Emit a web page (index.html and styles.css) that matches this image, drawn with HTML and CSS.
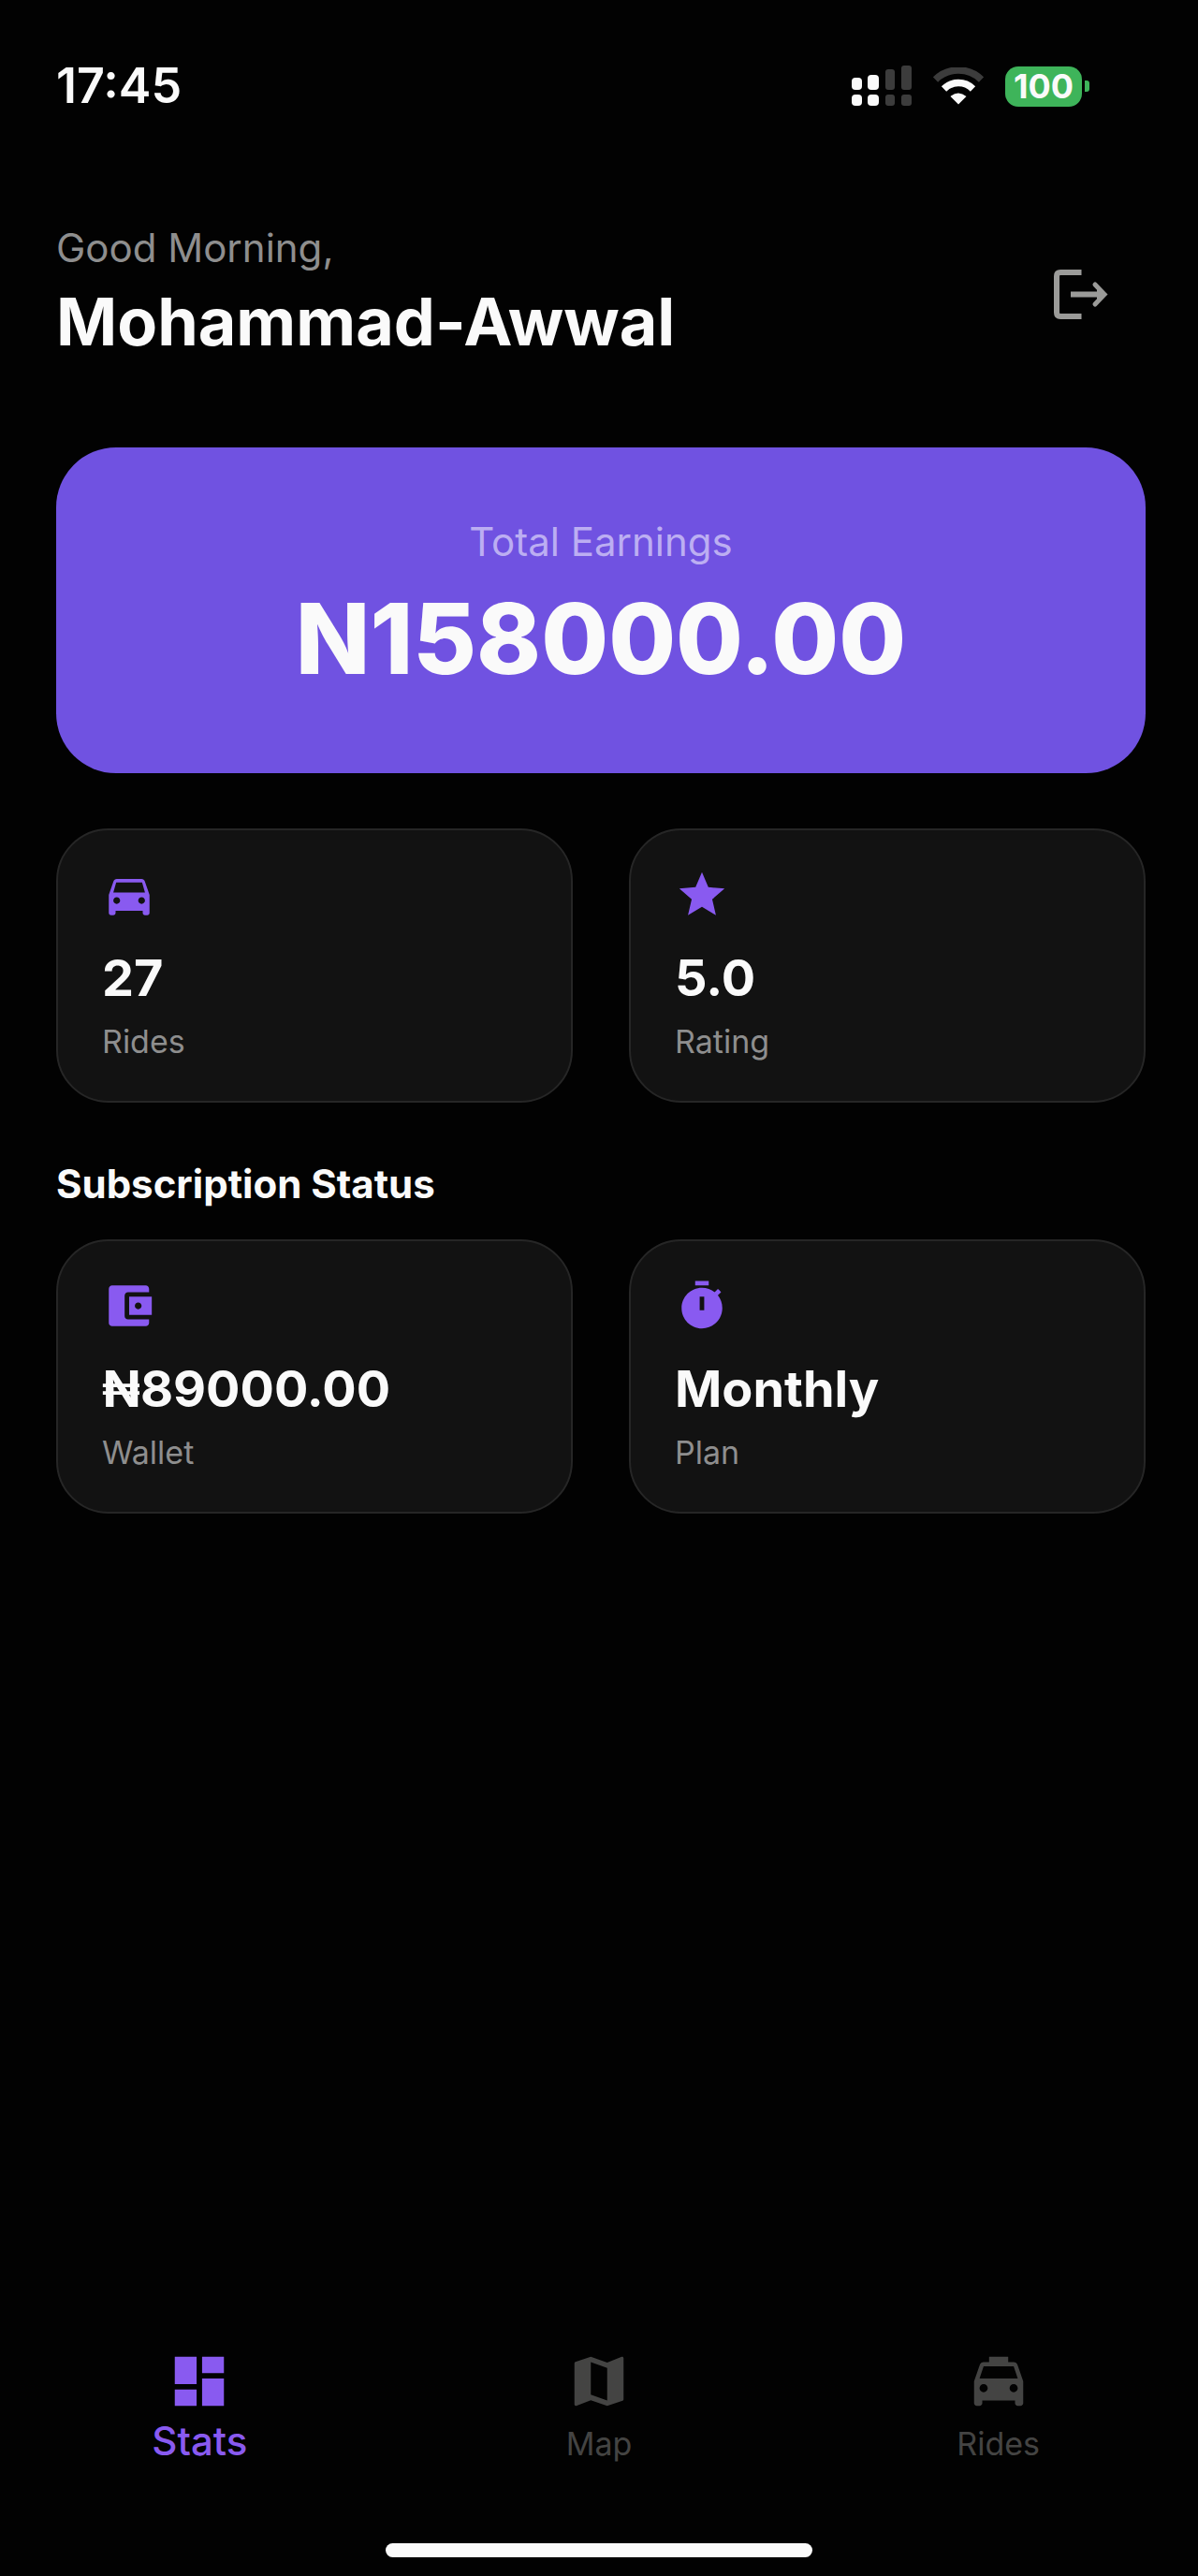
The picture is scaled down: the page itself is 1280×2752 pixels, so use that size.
FILE: index.html
```html
<!DOCTYPE html>
<html lang="en">
<head>
  <meta charset="UTF-8" />
  <meta name="viewport" content="width=device-width, initial-scale=1" />
  <title>Driver Stats</title>
  <link rel="stylesheet" href="styles.css">
</head>
<body>

<!-- Status bar -->
<div class="status-bar">
  <span class="time">17:45</span>
  <div class="status-icons">
    <svg class="signal" viewBox="0 0 64 44" fill="#fafafa">
      <rect x="0" y="13" width="11" height="13" rx="4" />
      <rect x="17" y="10" width="12" height="16" rx="4" />
      <rect x="36" y="4" width="10" height="22" rx="3" fill="#3c3c3c" />
      <rect x="53" y="0" width="11" height="26" rx="3" fill="#3c3c3c" />
      <rect x="0" y="31" width="11" height="12" rx="4" />
      <rect x="17" y="31" width="12" height="12" rx="4" />
      <rect x="36" y="31" width="10" height="12" rx="3" fill="#3c3c3c" />
      <rect x="53" y="31" width="11" height="12" rx="3" fill="#3c3c3c" />
    </svg>
    <svg class="wifi" viewBox="0 0 54 40" fill="none">
      <path d="M2.500 13A35 35 0 0 1 51.500 13" stroke="#3c3c3c" stroke-width="7.500" />
      <path d="M11.500 23A22 22 0 0 1 42.500 23" stroke="#fafafa" stroke-width="7.500" />
      <path d="M18.500 31Q27 24 35.500 31L27 39.500Z" fill="#fafafa" />
    </svg>
    <div class="battery">
      <span class="battery-level">100</span>
      <span class="battery-tip"></span>
    </div>
  </div>
</div>

<!-- Main Content -->
<main class="main-content">
  <header class="header">
    <div>
      <p class="greeting">Good Morning,</p>
      <h1 class="user-name">Mohammad-Awwal</h1>
    </div>
    <button class="logout-btn" aria-label="Log out">
      <svg viewBox="0 0 58 54" fill="none" stroke="#9b9b99" stroke-width="6">
        <path d="M29.500 3H7Q3 3 3 7V46Q3 50 7 50H29.500" />
        <path d="M18 26.500H51" />
        <path d="M44 16L54 26.500L44 37" stroke-linecap="round" stroke-width="5" />
        <path d="M46 20L57.500 26.500L46 33Z" fill="#9b9b99" stroke="none" />
      </svg>
    </button>
  </header>

  <section class="earnings">
    <p class="earnings-label">Total Earnings</p>
    <p class="earnings-amount">N158000.00</p>
  </section>

  <section class="cards">
    <div class="card">
      <svg class="card-icon" viewBox="0 0 24 24"><path d="M18.920 6.010C18.720 5.420 18.160 5 17.500 5h-11c-.66 0-1.210.42-1.420 1.010L3 12v8c0 .55.45 1 1 1h1c.55 0 1-.45 1-1v-1h12v1c0 .55.45 1 1 1h1c.55 0 1-.45 1-1v-8l-2.080-5.990zM6.500 16c-.83 0-1.500-.67-1.500-1.500S5.670 13 6.500 13s1.500.67 1.500 1.500S7.330 16 6.500 16zm11 0c-.83 0-1.500-.67-1.500-1.500s.67-1.500 1.500-1.500 1.500.67 1.500 1.500-.67 1.500-1.500 1.500zM5 11l1.270-4.500h11.460L19 11H5z" /></svg>
      <p class="card-value">27</p>
      <p class="card-label">Rides</p>
    </div>
    <div class="card">
      <svg class="card-icon" viewBox="0 0 24 24"><path d="M12 17.270L18.180 21l-1.640-7.030L22 9.240l-7.190-.61L12 2 9.190 8.630 2 9.240l5.460 4.730L5.820 21z" /></svg>
      <p class="card-value">5.0</p>
      <p class="card-label">Rating</p>
    </div>
  </section>

  <h2 class="section-title">Subscription Status</h2>

  <section class="cards">
    <div class="card">
      <svg class="card-icon" viewBox="0 0 24 24"><path d="M20.800 18v1.500c0 .8-.7 1.500-1.500 1.500H4.500c-.8 0-1.500-.7-1.500-1.500v-15C3 3.700 3.700 3 4.500 3h14.800c.8 0 1.500.7 1.500 1.500V6H11.500c-.8 0-1.500.7-1.500 1.500v9c0 .8.7 1.500 1.500 1.500h9.300zm-8.800-2h10V8H12v8zm4-2.500c-.83 0-1.500-.67-1.500-1.500s.67-1.500 1.500-1.500 1.500.67 1.500 1.500-.67 1.500-1.500 1.500z" /></svg>
      <p class="card-value">₦89000.00</p>
      <p class="card-label">Wallet</p>
    </div>
    <div class="card">
      <svg class="card-icon" viewBox="0 0 24 24"><path d="M9 1h6v2H9zM19.030 7.390l1.420-1.420c-.43-.51-.9-.99-1.410-1.410l-1.420 1.420C16.070 4.740 14.120 4 12 4c-4.970 0-9 4.030-9 9s4.020 9 9 9 9-4.030 9-9c0-2.120-.74-4.070-1.970-5.610zM13 14h-2V8h2v6z" /></svg>
      <p class="card-value">Monthly</p>
      <p class="card-label">Plan</p>
    </div>
  </section>
</main>

<!-- Bottom navigation -->
<nav class="bottom-nav">
  <a href="#" class="nav-link active">
    <svg class="nav-icon" viewBox="0 0 24 24"><path d="M3 13h8V3H3v10zm0 8h8v-6H3v6zm10 0h8V11h-8v10zm0-18v6h8V3h-8z" /></svg>
    <span>Stats</span>
  </a>
  <a href="#" class="nav-link">
    <svg class="nav-icon" viewBox="0 0 24 24"><path d="M20.500 3l-.16.030L15 5.100 9 3 3.360 4.900c-.21.070-.36.250-.36.480V20.500c0 .28.220.5.500.5l.16-.030L9 18.900l6 2.100 5.640-1.900c.21-.070.36-.25.36-.48V3.500c0-.28-.22-.5-.5-.5zM15 19l-6-2.110V5l6 2.110V19z" /></svg>
    <span>Map</span>
  </a>
  <a href="#" class="nav-link">
    <svg class="nav-icon" viewBox="0 0 24 24"><path d="M18.920 6.010C18.720 5.420 18.160 5 17.500 5H15.500V3h-7v2H6.500c-.66 0-1.210.42-1.420 1.010L3 12v8c0 .55.45 1 1 1h1c.55 0 1-.45 1-1v-1h12v1c0 .55.45 1 1 1h1c.55 0 1-.45 1-1v-8l-2.080-5.990zM6.500 16c-.83 0-1.500-.67-1.500-1.500S5.670 13 6.500 13s1.500.67 1.500 1.500S7.330 16 6.500 16zm11 0c-.83 0-1.500-.67-1.500-1.500s.67-1.500 1.500-1.500 1.500.67 1.500 1.500-.67 1.500-1.500 1.500zM5 11l1.500-4.500h11L19 11H5z" /></svg>
    <span>Rides</span>
  </a>
</nav>
<div class="home-indicator"></div>

</body>
</html>
```
FILE: styles.css
```css
* {
  margin: 0; padding: 0; box-sizing: border-box;
}
body {
  font-family: 'Inter', sans-serif;
  font-optical-sizing: none;
  background: #020202;
  color: #fafafa;
  min-height: 100vh;
  display: flex;
  flex-direction: column;
}
svg {
  display: block;
}

/* status bar */
.status-bar {
  display: flex;
  justify-content: space-between;
  align-items: center;
  padding: 62px 116px 0 60px;
}
.time {
  font-size: 52px;
  line-height: 60px;
  font-weight: 600;
}
.status-icons {
  display: flex;
  align-items: center;
  gap: 23px;
}
.signal {
  width: 64px;
  height: 44px;
}
.wifi {
  width: 54px;
  height: 40px;
}
.battery {
  display: flex;
  align-items: center;
  gap: 3px;
}
.battery-level {
  width: 82px;
  background: #3eb45a;
  border-radius: 14px;
  font-size: 36px;
  line-height: 43px;
  font-weight: 700;
  text-align: center;
}
.battery-tip {
  width: 5px;
  height: 12px;
  background: #3eb45a;
  border-radius: 0 3px 3px 0;
}

/* main content */
.main-content {
  padding: 118px 56px 0 60px;
}
.header {
  display: flex;
  justify-content: space-between;
  align-items: center;
  margin-bottom: 88px;
}
.greeting {
  color: #8e8e8e;
  font-size: 42px;
  line-height: 50px;
}
.user-name {
  font-size: 70px;
  line-height: 92px;
  font-weight: 700;
  margin-top: 8px;
}
.logout-btn {
  background: none;
  border: none;
  padding: 0 40px 0 0;
  cursor: pointer;
}
.logout-btn svg {
  width: 58px;
  height: 54px;
}
.earnings {
  background: #7052e1;
  border-radius: 64px;
  padding: 76px 40px 84px;
  text-align: center;
}
.earnings-label {
  color: #bcaef2;
  font-size: 42px;
  line-height: 50px;
}
.earnings-amount {
  font-size: 104px;
  line-height: 120px;
  font-weight: 800;
  margin-top: 18px;
}
.cards {
  display: grid;
  grid-template-columns: 1fr 1fr;
  gap: 60px;
}
.earnings + .cards {
  margin-top: 59px;
}
.card {
  background: #121212;
  border: 2px solid #262626;
  border-radius: 56px;
  padding: 40px 47px 43px;
}
.card-icon {
  width: 58px;
  height: 58px;
  fill: #895af0;
}
.card-value {
  font-size: 54px;
  line-height: 64px;
  font-weight: 700;
  margin-top: 28px;
}
.card-label {
  color: #8e8e8e;
  font-size: 34px;
  line-height: 40px;
  margin-top: 16px;
}
.section-title {
  font-size: 42px;
  line-height: 50px;
  font-weight: 700;
  margin: 62px 0 34px;
}

/* bottom navigation */
.bottom-nav {
  display: grid;
  grid-template-columns: repeat(3, 1fr);
  margin-top: auto;
}
.nav-link {
  display: flex;
  flex-direction: column;
  align-items: center;
  color: #444443;
  font-size: 34px;
  line-height: 52px;
  text-decoration: none;
  gap: 6px;
}
.nav-link.active {
  color: #895af0;
  font-size: 42px;
  line-height: 46px;
  font-weight: 500;
}
.nav-icon {
  width: 70px;
  height: 70px;
  fill: currentColor;
}
.home-indicator {
  width: 456px;
  height: 15px;
  background: #fafafa;
  border-radius: 8px;
  margin: 80px auto 20px;
}
```
